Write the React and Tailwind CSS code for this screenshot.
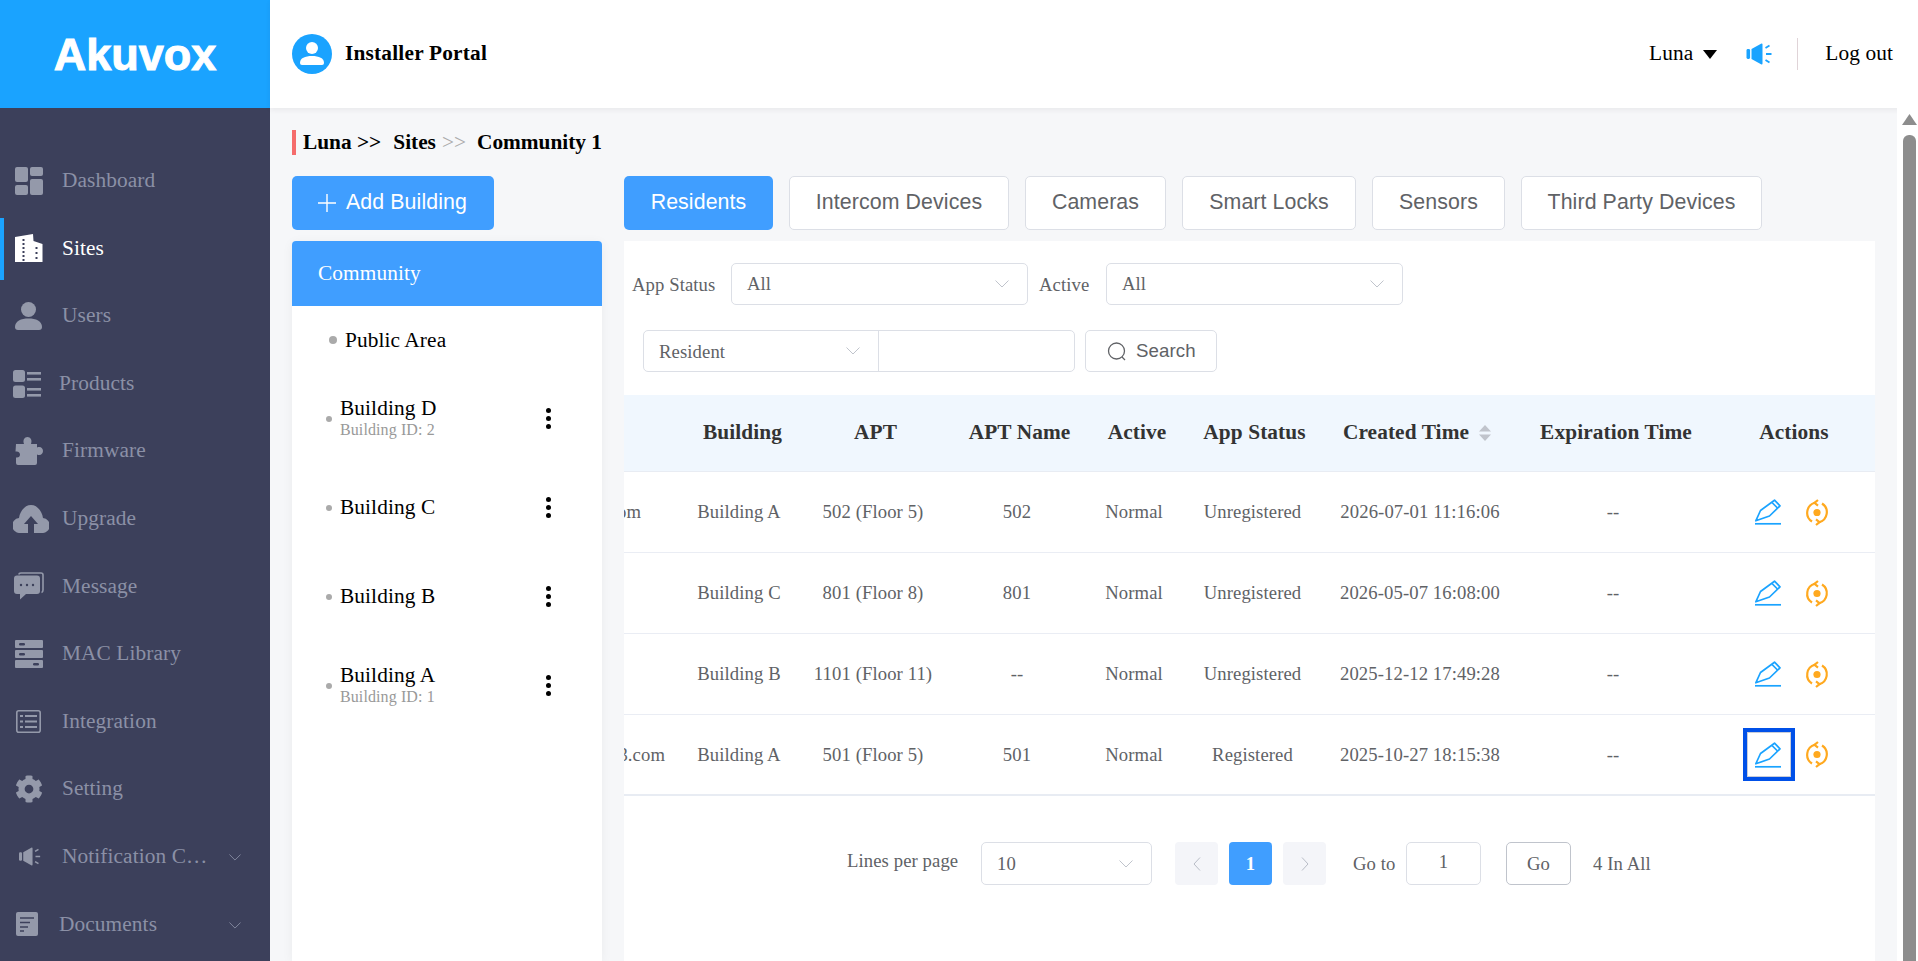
import React from "react";
import { FaCog } from "react-icons/fa";

const G = "#9499aa";
const BG = "#3c405b";

const Dashboard = () => (
  <svg width="28" height="28" viewBox="0 0 28 28" fill={G}>
    <rect x="0" y="0" width="13" height="15" rx="2" />
    <rect x="0" y="18" width="13" height="10" rx="2" />
    <rect x="15" y="0" width="13" height="9" rx="2" />
    <rect x="15" y="12" width="13" height="16" rx="2" />
  </svg>
);
const Sites = () => (
  <svg width="28" height="28" viewBox="0 0 28 28">
    <path d="M0 3 L18 0 L18.5 7 L27.5 10 V28 H0Z" fill="#fff" />
    {[5, 9, 13, 17, 21, 25].map((y) => (
      <rect key={y} x="7.5" y={y} width="2" height="2" fill={BG} />
    ))}
    {[13, 18, 23].map((y) => (
      <rect key={y} x="20.5" y={y} width="2" height="2" fill={BG} />
    ))}
  </svg>
);
const Users = () => (
  <svg width="27" height="28" viewBox="0 0 27 28" fill={G}>
    <circle cx="13.5" cy="7.5" r="7.5" />
    <path d="M0 25 C0 19 6 16.5 13.5 16.5 S27 19 27 25 C27 27 26 28 24 28 H3 C1 28 0 27 0 25Z" />
  </svg>
);
const Products = () => (
  <svg width="28" height="28" viewBox="0 0 28 28" fill={G}>
    <rect x="0" y="0" width="12" height="12" rx="2.5" />
    <rect x="0" y="15.5" width="12" height="12.5" rx="2.5" />
    <rect x="14" y="2" width="14" height="2.6" />
    <rect x="14" y="8" width="14" height="2.6" />
    <rect x="14" y="18" width="14" height="2.6" />
    <rect x="14" y="24" width="14" height="2.6" />
  </svg>
);
const Firmware = () => (
  <svg width="28" height="28" viewBox="0 0 28 28" fill={G}>
    <path d="M1 7 H9 C7.5 3 9.5 0 12.5 0 S17.5 3 16 7 H22 V10.5 C25.5 9 28 11 28 14 S25.5 19 22 17.5 V26 Q22 28 20 28 H3 Q1 28 1 26 V20.5 C3.5 21 5 19.5 5 17.5 S3.5 14 0.5 14.5 Z" />
  </svg>
);
const Upgrade = () => (
  <svg width="36" height="28" viewBox="0 0 36 28">
    <path d="M7.5 28 A7.5 7.5 0 0 1 6 13 C7 6 12 0 18 0 S29 6 30 13 A7.5 7.5 0 0 1 28.5 28Z" fill={G} />
    <path d="M18 11 L25 19 H21 V28 H15 V19 H11Z" fill={BG} />
  </svg>
);
const Message = () => (
  <svg width="30" height="28" viewBox="0 0 30 28">
    <path d="M5 2.5 Q5 1 7 1 H27 Q29 1 29 3 V18 Q29 20 27.5 20.5" fill="none" stroke={G} strokeWidth="1.6" />
    <path d="M3 3.5 H23 Q26 3.5 26 6.5 V19 Q26 22 23 22 H12 L6 27.5 V22 H3 Q0 22 0 19 V6.5 Q0 3.5 3 3.5Z" fill={G} />
    <circle cx="7" cy="13" r="1.2" fill={BG} />
    <circle cx="13" cy="13" r="1.2" fill={BG} />
    <circle cx="19" cy="13" r="1.2" fill={BG} />
  </svg>
);
const Mac = () => (
  <svg width="28" height="28" viewBox="0 0 28 28" fill={G}>
    <rect x="0" y="0" width="28" height="8" rx="1" />
    <rect x="0" y="10" width="28" height="8" rx="1" />
    <rect x="0" y="20" width="28" height="8" rx="1" />
    <rect x="4" y="3" width="6" height="2.4" rx="1.2" fill={BG} />
    <rect x="4" y="13" width="6" height="2.4" rx="1.2" fill={BG} />
    <rect x="18" y="23" width="6" height="2.4" rx="1.2" fill={BG} />
  </svg>
);
const Integration = () => (
  <svg width="25" height="23" viewBox="0 0 25 23" fill="none" stroke={G} strokeWidth="1.6">
    <rect x="0.8" y="0.8" width="23.4" height="21.4" rx="2" />
    <path d="M4 6 H7 M9 6 H21 M4 11.5 H7 M9 11.5 H21 M4 17 H7 M9 17 H21" strokeWidth="1.8" />
  </svg>
);
const Speaker = ({ c, w, h }) => (
  <svg width={w} height={h} viewBox="0 0 26 22" fill={c}>
    <rect x="0" y="6" width="3.6" height="10" rx="1.4" />
    <path d="M5 6 L15 0.5 Q16 0.3 16 1.5 V20.5 Q16 21.7 15 21.5 L5 16Z" />
    <path d="M19 5 L23 2.5 M19.5 11 H25 M19 17 L23 19.5" stroke={c} strokeWidth="1.8" fill="none" />
  </svg>
);
const Documents = () => (
  <svg width="22" height="24" viewBox="0 0 22 24">
    <rect x="0" y="0" width="22" height="24" rx="2" fill={G} />
    <path d="M4 6 H18 M4 10.5 H14 M4 15 H12 M4 19 H8" stroke={BG} strokeWidth="1.6" />
  </svg>
);
const Chevron = ({ c = "#c0c4cc", w = 14, h = 8 }) => (
  <svg width={w} height={h} viewBox="0 0 14 8" fill="none" stroke={c} strokeWidth="1">
    <path d="M0.5 0.5 L7 7 L13.5 0.5" />
  </svg>
);
const Pencil = () => (
  <svg width="26" height="26" viewBox="0 0 26 26" fill="none" stroke="#1aa3ff" strokeWidth="1.7">
    <path d="M0.8 21.8 L5.5 11.5 L19.5 1.2 L25 6.8 L14.5 17 Z" strokeLinejoin="round" />
    <path d="M17 3.5 L22.5 9" />
    <path d="M0 24.8 H26" />
  </svg>
);
const Sync = () => (
  <svg width="24" height="27" viewBox="0 0 24 27" fill="none" stroke="#ffa91f" strokeWidth="2.2">
    <path d="M10 3.8 A10.3 10.3 0 0 0 7 22.5" />
    <path d="M14 23.2 A10.3 10.3 0 0 0 17 4.5" />
    <path d="M13 1 L9.5 3.8 L13 6.6" />
    <path d="M11 20.4 L14.5 23.2 L11 26" />
    <circle cx="12" cy="13.5" r="3.6" fill="#ffa91f" stroke="none" />
  </svg>
);

const nav = [
  ["Dashboard", <Dashboard />, 15, 62],
  ["Sites", <Sites />, 15, 62, true],
  ["Users", <Users />, 15, 62],
  ["Products", <Products />, 13, 59],
  ["Firmware", <Firmware />, 15, 62],
  ["Upgrade", <Upgrade />, 13, 62],
  ["Message", <Message />, 14, 62],
  ["MAC Library", <Mac />, 15, 62],
  ["Integration", <Integration />, 16, 62],
  ["Setting", <FaCog size={28} color={G} />, 15, 62],
  ["Notification C…", <Speaker c={G} w={22} h={19} />, 19, 62, false, true],
  ["Documents", <Documents />, 16, 59, false, true],
];

function NavItem({ item }) {
  const [label, icon, ix, tx, active, chev] = item;
  return (
    <div className="relative h-[67.6px] flex items-center shrink-0">
      {active && <div className="absolute left-0 top-[3px] h-[62px] w-[4px] bg-[#1aa3ff]" />}
      <div className="absolute top-0 h-full flex items-center" style={{ left: ix }}>{icon}</div>
      <span
        className={`absolute top-[19px] leading-[28px] text-[21.33px] whitespace-nowrap ${active ? "text-white" : "text-[#8b90a6]"}`}
        style={{ left: tx }}
      >
        {label}
      </span>
      {chev && (
        <div className="absolute left-[229px] top-[31px]">
          <Chevron c="#8b90a6" w={12} h={7} />
        </div>
      )}
    </div>
  );
}

function Sidebar() {
  return (
    <aside className="w-[270px] shrink-0 h-full flex flex-col bg-[#3c405b] overflow-hidden">
      <div className="h-[108px] shrink-0 bg-[#1aa3ff] flex items-center justify-center">
        <span className="font-['Liberation_Sans',sans-serif] font-bold text-[45px] leading-none text-white tracking-normal [-webkit-text-stroke:1px_white]">Akuvox</span>
      </div>
      <nav className="pt-[39px] flex flex-col">
        {nav.map((n) => (
          <NavItem key={n[0]} item={n} />
        ))}
      </nav>
    </aside>
  );
}

function Header() {
  return (
    <header className="relative z-10 h-[108px] shrink-0 bg-white flex items-center pl-[22px] pr-[25px] shadow-[0_2px_5px_rgba(60,40,60,0.07)]">
      <svg width="40" height="40" viewBox="0 0 40 40">
        <circle cx="20" cy="20" r="20" fill="#1aa3ff" />
        <circle cx="20" cy="14" r="6" fill="#fff" />
        <path d="M8 29 C8 24 13 22 20 22 S32 24 32 29 Q32 31 30 31 H10 Q8 31 8 29Z" fill="#fff" />
      </svg>
      <span className="ml-[13px] font-bold text-[21.33px] text-black tracking-[0.2px]">Installer Portal</span>
      <div className="ml-auto flex items-center text-[21.33px] text-black">
        <span>Luna</span>
        <svg className="ml-[10px]" width="14" height="9" viewBox="0 0 14 9"><path d="M0 0 H14 L7 9Z" fill="#000" /></svg>
        <span className="ml-[29px] flex"><Speaker c="#1aa3ff" w={27} h={22} /></span>
        <span className="ml-[24px] w-px h-[32px] bg-[#e0d4d8]" />
        <span className="ml-[27px]">Log out</span>
      </div>
    </header>
  );
}

const Kebab = () => (
  <div className="flex flex-col gap-[3px]">
    <span className="w-[5px] h-[5px] rounded-full bg-black" />
    <span className="w-[5px] h-[5px] rounded-full bg-black" />
    <span className="w-[5px] h-[5px] rounded-full bg-black" />
  </div>
);

function BuildingRow({ name, id }) {
  return (
    <div className="h-[89px] flex items-center pl-[34px] pr-[51px]">
      <span className="w-[6px] h-[6px] rounded-full bg-[#aaaaaa]" />
      <div className={`ml-[8px] flex-1 flex flex-col ${id ? "-mt-[4px]" : "-mt-[2px]"}`}>
        <span className="text-[21.33px] leading-[26px] text-black">{name}</span>
        {id && <span className="text-[16px] leading-[18px] text-[#999999]">{id}</span>}
      </div>
      <Kebab />
    </div>
  );
}

function LeftColumn() {
  return (
    <div className="w-[310px] shrink-0 flex flex-col">
      <button className="w-[202px] h-[54px] rounded-[5px] bg-[#409eff] flex items-center pl-[26px] text-white font-['Liberation_Sans',sans-serif] text-[21.33px]">
        <svg width="18" height="18" viewBox="0 0 18 18" stroke="#fff" strokeWidth="1.4"><path d="M9 0 V18 M0 9 H18" /></svg>
        <span className="ml-[10px]">Add Building</span>
      </button>
      <div className="mt-[11px] flex-1 bg-white shadow-[0_2px_12px_rgba(0,0,0,0.05)] rounded-t-[4px]">
        <div className="h-[65px] rounded-t-[4px] bg-[#409eff] flex items-center pl-[26px] text-white text-[21.33px]">Community</div>
        <div className="h-[68px] flex items-center pl-[37px]">
          <span className="w-[8px] h-[8px] rounded-full bg-[#aaaaaa]" />
          <span className="ml-[8px] mt-[2px] text-[21.33px] text-black">Public Area</span>
        </div>
        <BuildingRow name="Building D" id="Building ID: 2" />
        <BuildingRow name="Building C" />
        <BuildingRow name="Building B" />
        <BuildingRow name="Building A" id="Building ID: 1" />
      </div>
    </div>
  );
}

const Tab = ({ children, active, w }) => (
  <div
    className={`h-[54px] rounded-[5px] flex items-center justify-center font-['Liberation_Sans',sans-serif] text-[21.33px] ${
      active ? "bg-[#409eff] text-white" : "bg-white border border-[#dcdfe6] text-[#606266]"
    }`}
    style={{ width: w }}
  >
    {children}
  </div>
);

function Tabs() {
  return (
    <div className="flex gap-[16px]">
      <Tab active w={149}>Residents</Tab>
      <Tab w={220}>Intercom Devices</Tab>
      <Tab w={141}>Cameras</Tab>
      <Tab w={174}>Smart Locks</Tab>
      <Tab w={133}>Sensors</Tab>
      <Tab w={241}>Third Party Devices</Tab>
    </div>
  );
}

const Select = ({ value, cls }) => (
  <div className={`h-[42px] rounded-[5px] border border-[#dcdfe6] bg-white flex items-center justify-between pl-[15px] pr-[18px] text-[18.67px] text-[#606266] ${cls}`}>
    <span>{value}</span>
    <Chevron />
  </div>
);

function Filters() {
  return (
    <div className="h-[154px] pt-[22px] flex flex-col gap-[25px] text-[18.67px] text-[#606266]">
      <div className="flex items-center h-[42px] pl-[8px]">
        <span className="w-[99px] mt-[2px]">App Status</span>
        <Select value="All" cls="w-[297px]" />
        <span className="ml-[11px] w-[67px] mt-[2px]">Active</span>
        <Select value="All" cls="w-[297px]" />
      </div>
      <div className="flex items-center h-[42px] pl-[19px]">
        <div className="flex w-[432px] h-[42px] rounded-[5px] border border-[#dcdfe6]">
          <div className="w-[235px] h-full flex items-center justify-between pl-[15px] pr-[18px] border-r border-[#dcdfe6]">
            <span className="mt-[1px]">Resident</span>
            <Chevron />
          </div>
        </div>
        <div className="ml-[10px] w-[132px] h-[42px] rounded-[5px] border border-[#dcdfe6] flex items-center pl-[21px] font-['Liberation_Sans',sans-serif]">
          <svg width="20" height="20" viewBox="0 0 20 20" fill="none" stroke="#606266" strokeWidth="1.3">
            <circle cx="9.5" cy="10" r="8" />
            <path d="M15 16 L18 19" />
          </svg>
          <span className="ml-[9px] -mt-[1px] text-[18.67px]">Search</span>
        </div>
      </div>
    </div>
  );
}

const cols = [45, 140, 128, 160, 74, 163, 172, 214, 155];

const rows = [
  ["a@a.com", 28, "Building A", "502 (Floor 5)", "502", "Normal", "Unregistered", "2026-07-01 11:16:06"],
  ["", 0, "Building C", "801 (Floor 8)", "801", "Normal", "Unregistered", "2026-05-07 16:08:00"],
  ["", 0, "Building B", "1101 (Floor 11)", "--", "Normal", "Unregistered", "2025-12-12 17:49:28"],
  ["resident123.com", 4, "Building A", "501 (Floor 5)", "501", "Normal", "Registered", "2025-10-27 18:15:38"],
];

function HeadCell({ w, pad = 0, children }) {
  return (
    <div className="flex items-center justify-center whitespace-nowrap" style={{ width: w, paddingLeft: pad > 0 ? pad : 0, paddingRight: pad < 0 ? -pad : 0 }}>
      {children}
    </div>
  );
}

function TableHead() {
  return (
    <div className="h-[77px] flex bg-[#f0f7fe] border-b border-[#e8ecf3] font-bold text-[21.33px] text-[#333333]">
      <div style={{ width: cols[0] }} />
      <HeadCell w={cols[1]} pad={7}>Building</HeadCell>
      <HeadCell w={cols[2]} pad={5}>APT</HeadCell>
      <HeadCell w={cols[3]} pad={5}>APT Name</HeadCell>
      <HeadCell w={cols[4]} pad={6}>Active</HeadCell>
      <HeadCell w={cols[5]} pad={4}>App Status</HeadCell>
      <HeadCell w={cols[6]} pad={-6}>
        Created Time
        <svg className="ml-[10px]" width="12" height="16" viewBox="0 0 12 16" fill="#c0c4cc"><path d="M6 0 L12 6.5 H0Z M6 16 L0 9.5 H12Z" /></svg>
      </HeadCell>
      <HeadCell w={cols[7]} pad={6}>Expiration Time</HeadCell>
      <HeadCell w={cols[8]} pad={-7}>Actions</HeadCell>
    </div>
  );
}

function Cell({ i, children }) {
  return (
    <div className="flex items-center justify-center whitespace-nowrap" style={{ width: cols[i] }}>{children}</div>
  );
}

function TableRow({ r, focus, last }) {
  const [email, epad, b, apt, name, act, st, t] = r;
  return (
    <div className={`h-[81px] flex text-[18.67px] text-[#606266] ${last ? "border-b-2 border-[#e8ecf3]" : "border-b border-[#eaedf4]"}`}>
      <div className="flex items-center justify-end overflow-hidden whitespace-nowrap" style={{ width: cols[0], paddingRight: epad }}>
        <span className="shrink-0">{email}</span>
      </div>
      <Cell i={1}>{b}</Cell>
      <Cell i={2}>{apt}</Cell>
      <Cell i={3}>{name}</Cell>
      <Cell i={4}>{act}</Cell>
      <Cell i={5}>{st}</Cell>
      <Cell i={6}>{t}</Cell>
      <Cell i={7}>--</Cell>
      <div className="flex items-center pl-[23px]" style={{ width: cols[8] }}>
        <div className={`w-[52px] h-[53px] flex items-center justify-center pr-[3px] border-4 ${focus ? "border-[#0050e8] shadow-[inset_0_0_0_1px_#c8ccd8]" : "border-transparent"}`}>
          <Pencil />
        </div>
        <div className="ml-[10px] flex"><Sync /></div>
      </div>
    </div>
  );
}

function Pager() {
  const box = "h-[43px] rounded-[4px] flex items-center justify-center";
  return (
    <div className="pt-[46px] pl-[223px] flex items-center text-[18.67px] text-[#606266]">
      <span className="w-[134px] -mt-[5px]">Lines per page</span>
      <div className="w-[171px] h-[43px] rounded-[5px] border border-[#dcdfe6] flex items-center justify-between pl-[15px] pr-[18px]">
        <span>10</span>
        <Chevron />
      </div>
      <div className={`ml-[23px] w-[43px] bg-[#f4f5f9] ${box}`}>
        <svg width="8" height="14" viewBox="0 0 8 14" fill="none" stroke="#b8bcc6"><path d="M7 0.5 L1 7 L7 13.5" /></svg>
      </div>
      <div className={`ml-[11px] w-[43px] bg-[#409eff] font-bold text-white ${box}`}>1</div>
      <div className={`ml-[11px] w-[43px] bg-[#f4f5f9] ${box}`}>
        <svg width="8" height="14" viewBox="0 0 8 14" fill="none" stroke="#b8bcc6"><path d="M1 0.5 L7 7 L1 13.5" /></svg>
      </div>
      <span className="ml-[27px] w-[53px]">Go to</span>
      <div className="w-[75px] h-[43px] rounded-[5px] border border-[#dcdfe6] flex items-center justify-center pb-[3px]">1</div>
      <div className="ml-[25px] w-[65px] h-[43px] rounded-[5px] border border-[#c0c4cc] flex items-center justify-center">Go</div>
      <span className="ml-[22px]">4 In All</span>
    </div>
  );
}

function RightColumn() {
  return (
    <div className="w-[1251px] shrink-0 flex flex-col">
      <Tabs />
      <div className="mt-[11px] flex-1 bg-white">
        <Filters />
        <TableHead />
        {rows.map((r, i) => (
          <TableRow key={i} r={r} focus={i === 3} last={i === 3} />
        ))}
        <Pager />
      </div>
    </div>
  );
}

function Scrollbar() {
  return (
    <div className="relative z-20 w-[21px] shrink-0 bg-white flex flex-col items-center pt-[6px] pl-[3px]">
      <svg width="15" height="11" viewBox="0 0 15 11" fill="#8d8d8d"><path d="M7.5 0 L15 11 H0Z" /></svg>
      <div className="mt-[10px] w-[13px] flex-1 rounded-t-[6px] bg-[#8d8d8d]" />
    </div>
  );
}

export default function App() {
  return (
    <div className="w-screen h-screen flex overflow-hidden font-['Liberation_Serif',serif] tracking-[0.1px] bg-white">
      <Sidebar />
      <div className="flex-1 min-w-0 flex flex-col">
        <Header />
        <div className="flex-1 min-h-0 flex">
          <main className="flex-1 min-w-0 bg-[#f6f7f9] pt-[22px] pl-[22px] flex flex-col">
            <div className="h-[25px] flex items-center border-l-4 border-[#f56c6c] pl-[7px] text-[21.33px] font-bold text-black whitespace-nowrap tracking-normal">
              <span>Luna &gt;&gt;</span>
              <span className="ml-[12px]">Sites</span>
              <span className="ml-[6px] font-normal text-[#aaaaaa]">&gt;&gt;</span>
              <span className="ml-[11px]">Community 1</span>
            </div>
            <div className="mt-[21px] flex-1 min-h-0 flex gap-[22px]">
              <LeftColumn />
              <RightColumn />
            </div>
          </main>
          <Scrollbar />
        </div>
      </div>
    </div>
  );
}
